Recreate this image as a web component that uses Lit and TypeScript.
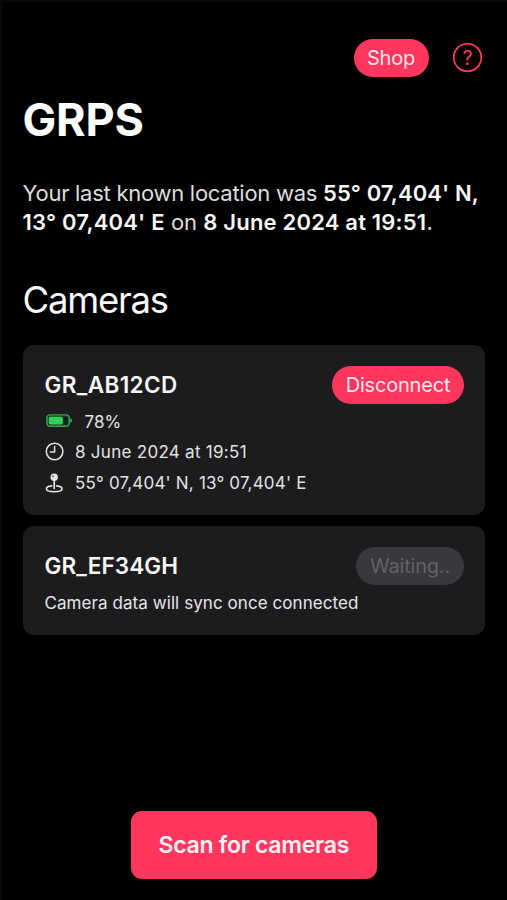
import { LitElement, html, css, svg } from "lit";
import { customElement, property } from "lit/decorators.js";

const batteryIcon = svg`
  <svg class="icon battery" width="27" height="14" viewBox="0 0 27 14">
    <rect x="0.9" y="0.9" width="22.4" height="11.4" rx="3.4" fill="#1b3a24" stroke="#2fa84c" stroke-width="1.4"/>
    <rect x="17.6" y="2.8" width="4" height="7.6" rx="1" fill="#1c1c1e"/>
    <rect x="2.8" y="2.8" width="14" height="7.6" rx="1.6" fill="#30d158"/>
    <path d="M24.2 4.400c1.200.3 1.900 1.200 1.900 2.200s-.7 1.900-1.900 2.200z" fill="#2fb350"/>
  </svg>`;

const clockIcon = svg`
  <svg class="icon" width="20" height="20" viewBox="0 0 20 20" fill="none" stroke="#e4e4e6" stroke-width="1.5" stroke-linecap="round" stroke-linejoin="round">
    <circle cx="9.600" cy="9.500" r="8.300"/>
    <path d="M9.600 4.400V10H5.400"/>
  </svg>`;

const locationIcon = svg`
  <svg class="icon" width="20" height="20" viewBox="0 0 20 20">
    <path d="M6.800 12.900C3.500 13.300 1.400 14.400 1.400 15.700C1.400 17.500 4.700 18.700 9.200 18.700S17 17.500 17 15.700C17 14.400 14.900 13.300 11.600 12.900" fill="none" stroke="#e4e4e6" stroke-width="1.600" stroke-linecap="round"/>
    <path d="M9.200 6V15.400" stroke="#e4e4e6" stroke-width="1.700" stroke-linecap="round"/>
    <circle cx="9.200" cy="4.200" r="3.700" fill="#e4e4e6"/>
    <circle cx="8" cy="3.200" r="1.100" fill="#77777a"/>
  </svg>`;

@customElement("pill-button")
class PillButton extends LitElement {
  @property({ type: Boolean }) waiting = false;

  static styles = css`
    :host { display: block; flex: none; }
    .pill {
      display: block; box-sizing: border-box; width: 100%; height: 38px; padding: 0;
      border: 0; border-radius: 19px; background: #ff375f; color: #ffe6eb;
      font: 400 20px/38px Inter, "Liberation Sans", sans-serif; text-align: center;
      letter-spacing: -0.2px; white-space: nowrap;
    }
    .waiting { background: #39393d; color: #626267; }
  `;

  render() {
    return html`<button class="pill ${this.waiting ? "waiting" : ""}" ?disabled=${this.waiting}><slot></slot></button>`;
  }
}

@customElement("app-root")
class AppRoot extends LitElement {
  static styles = css`
    :host {
      display: block; box-sizing: border-box; width: 100%; height: 900px;
      background: #000; color: #f8f8f8; overflow: hidden;
      box-shadow: inset 2px 2px 0 #090909;
      font-family: Inter, "Liberation Sans", sans-serif;
    }
    .screen {
      display: flex; flex-direction: column; box-sizing: border-box;
      height: 100%; padding: 38.5px 22px 21.500px 22.500px;
    }
    .toolbar { display: flex; justify-content: flex-end; align-items: center; gap: 24px; height: 38px; padding-right: 2.500px; }
    .shop { width: 75px; }
    .help { display: block; }
    .help-mark { font: 400 19.500px Inter, sans-serif; fill: #ff375f; }
    h1 { margin: 16.500px 0 0; font-size: 45px; line-height: 54px; font-weight: 700; letter-spacing: -0.2px; color: #fff; }
    .summary { margin: 31.500px 0 0; font-size: 22px; line-height: 29.500px; color: #dedede; white-space: nowrap; }
    .line { display: block; }
    .first { letter-spacing: -0.27px; }
    .first strong { letter-spacing: 0.1px; }
    .second strong { letter-spacing: 0.2px; }
    .summary strong { font-weight: 600; color: #f8f8f8; }
    h2 { margin: 39.500px 0 0; font-size: 36.500px; line-height: 46px; font-weight: 400; letter-spacing: -1.25px; }
    .cards { display: flex; flex-direction: column; gap: 11px; margin-top: 21.500px; }
    .card { box-sizing: border-box; height: 170.500px; border-radius: 11px; background: #1c1c1e; padding: 21px 21px 0 22px; }
    .compact { height: 109px; }
    .card-head { display: flex; align-items: center; justify-content: space-between; height: 38px; }
    h3 { margin: 0; font-size: 22.500px; line-height: 30px; font-weight: 600; letter-spacing: 0.38px; }
    .compact h3 { letter-spacing: 0.12px; }
    .disconnect { width: 132px; }
    .wait { width: 108px; }
    .details { display: grid; grid-template-rows: 30px 30px 32px; margin-top: 3.500px; }
    .row { display: flex; align-items: center; font-size: 17px; color: #e2e2e4; white-space: nowrap; }
    .row .icon { flex: none; margin-right: 10.500px; }
    .row .battery { margin: 0 12px 1.500px 1px; }
    .date { letter-spacing: 0.28px; }
    .coords { letter-spacing: 0.19px; }
    .note { margin: 6px 0 0; font-size: 17px; line-height: 24px; letter-spacing: 0.07px; color: #e6e6e8; white-space: nowrap; }
    .scan {
      align-self: center; width: 246px; height: 68px; margin-top: auto; padding: 0;
      border: 0; border-radius: 11px; background: #ff375f; color: #fff0f3;
      font: 600 23px/68px Inter, "Liberation Sans", sans-serif; letter-spacing: -0.27px; white-space: nowrap;
    }
  `;

  render() {
    return html`
      <main class="screen">
        <nav class="toolbar">
          <pill-button class="shop">Shop</pill-button>
          <svg class="help" width="30" height="30" viewBox="0 0 30 30">
            <circle cx="14.500" cy="14.500" r="13.800" fill="none" stroke="#ff375f" stroke-width="1.800"/>
            <text class="help-mark" x="14.500" y="21.500" text-anchor="middle">?</text>
          </svg>
        </nav>
        <h1><span>GRPS</span></h1>
        <p class="summary">
          <span class="line first">Your last known location was <strong>55° 07,404' N,</strong></span>
          <span class="line second"><strong>13° 07,404' E</strong> on <strong>8 June 2024 at 19:51</strong>.</span>
        </p>
        <h2>Cameras</h2>
        <section class="cards">
          <article class="card">
            <header class="card-head"><h3>GR_AB12CD</h3><pill-button class="disconnect">Disconnect</pill-button></header>
            <div class="details">
              <div class="row">${batteryIcon}<span>78%</span></div>
              <div class="row">${clockIcon}<span class="date">8 June 2024 at 19:51</span></div>
              <div class="row">${locationIcon}<span class="coords">55° 07,404' N, 13° 07,404' E</span></div>
            </div>
          </article>
          <article class="card compact">
            <header class="card-head"><h3>GR_EF34GH</h3><pill-button class="wait" waiting>Waiting..</pill-button></header>
            <p class="note">Camera data will sync once connected</p>
          </article>
        </section>
        <button class="scan">Scan for cameras</button>
      </main>
    `;
  }
}
